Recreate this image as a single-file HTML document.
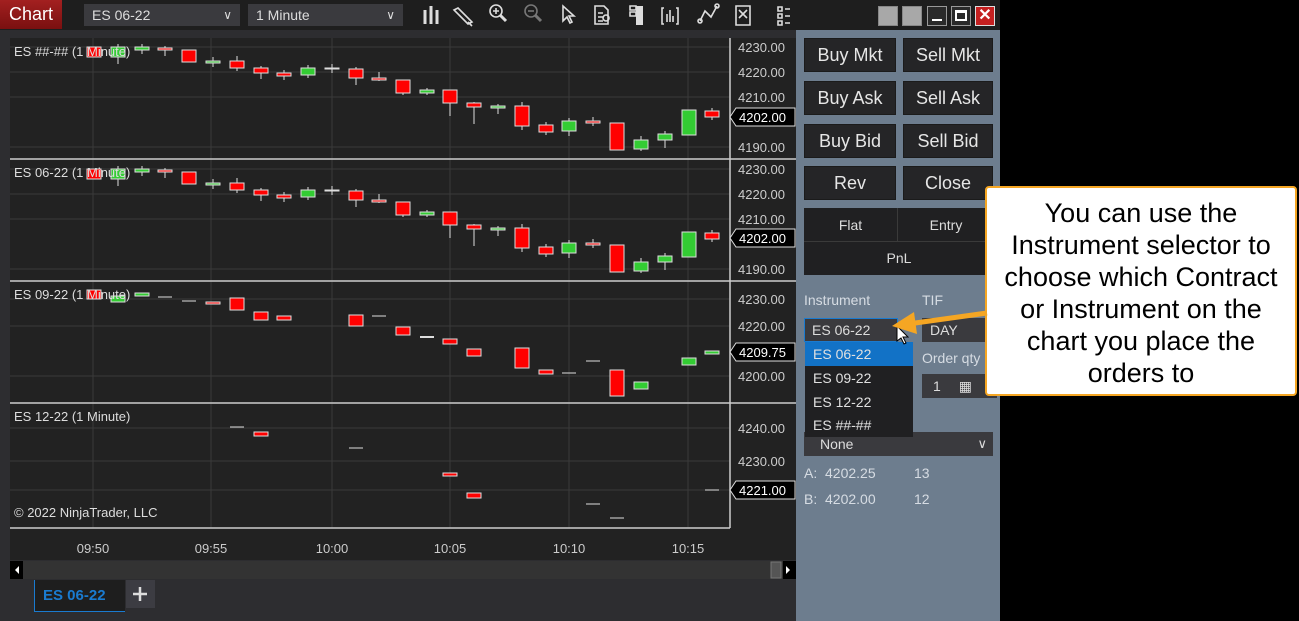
<!DOCTYPE html>
<html><head><meta charset="utf-8"><style>
*{margin:0;padding:0;box-sizing:border-box}
body{width:1299px;height:621px;background:#000;position:relative;overflow:hidden;font-family:"Liberation Sans",sans-serif}
.a{position:absolute}
.btn{position:absolute;background:#252527;border:1px solid #1b1b1b;color:#e6e6e6;font-size:18px;text-align:center;line-height:32px;height:34px}
.lbl{position:absolute;color:#d6dce3;font-size:14px}
</style></head><body>
<div class="a" style="left:0;top:0;width:1000px;height:30px;background:#1e1e1e"></div>
<div class="a" style="left:0;top:0;width:62px;height:29px;background:linear-gradient(#a32020,#7a1010);color:#fff;font-size:18px;line-height:29px;text-align:center">Chart</div>
<div class="a" style="left:84px;top:4px;width:156px;height:22px;background:#3a3a3e;color:#ddd;font-size:14px;line-height:22px;padding-left:8px">ES 06-22<span style="position:absolute;right:8px;font-size:12px">&#8744;</span></div>
<div class="a" style="left:248px;top:4px;width:155px;height:22px;background:#3a3a3e;color:#ddd;font-size:14px;line-height:22px;padding-left:8px">1 Minute<span style="position:absolute;right:8px;font-size:12px">&#8744;</span></div>
<svg class="a" style="left:410px;top:0" width="380" height="30" fill="none" stroke="#ddd" stroke-width="1.6">
<path d="M15 10v14M21 6v18M27 10v14" stroke-width="3"/>
<path d="M48 8l14 14-4 2-14-14zM58 22l4 4"/>
<circle cx="86" cy="11" r="6"/><path d="M86 8v6M83 11h6"/><path d="M90 15l6 6" stroke-width="3"/>
<g stroke="#777"><circle cx="121" cy="11" r="6"/><path d="M118 11h6"/><path d="M125 15l6 6" stroke-width="3"/></g>
<path d="M153 6l0 15 4-4 3 6 2-1-3-6h5z"/>
<path d="M185 6h9l4 4v14h-13zM188 13h5M188 17h5M188 21h5"/><circle cx="196" cy="18" r="3"/>
<path d="M220 6h6v4h-6zM220 12h6v4h-6z"/><rect x="226" y="6" width="7" height="19" fill="#ddd" stroke="none"/>
<path d="M254 8h-2v16h2M266 8h2v16h-2M257 22v-8M260 22v-12M263 22v-6"/>
<path d="M290 21l5-10 6 6 6-11"/><circle cx="290" cy="21" r="2"/><circle cx="307" cy="6" r="2"/>
<path d="M326 6h14v19h-14zM329 10l8 8M337 10l-8 8"/>
<path d="M368 7h4v4h-4zM368 14h4v4h-4zM368 21h4v4h-4zM375 9h12M375 16h12M375 23h12"/>
</svg>
<div class="a" style="left:878px;top:6px;width:20px;height:20px;background:#a8a8a8;border:1px solid #888"></div>
<div class="a" style="left:902px;top:6px;width:20px;height:20px;background:#a8a8a8;border:1px solid #888"></div>
<div class="a" style="left:927px;top:6px;width:20px;height:20px;background:#2a2a2a;border:1px solid #999"><div class="a" style="left:4px;top:12px;width:10px;height:2px;background:#fff"></div></div>
<div class="a" style="left:951px;top:6px;width:20px;height:20px;background:#2a2a2a;border:1px solid #999"><div class="a" style="left:3px;top:3px;width:12px;height:11px;border:2px solid #fff;border-top-width:3px"></div></div>
<div class="a" style="left:975px;top:6px;width:20px;height:20px;background:#c42020;border:1px solid #ddd;color:#fff;font-weight:bold;font-size:16px;text-align:center;line-height:18px">✕</div>

<div class="a" style="left:0;top:30px;width:796px;height:591px;background:#2d2d30"></div>
<svg class="a" style="left:0;top:0" width="796" height="621" font-family="Liberation Sans" font-size="13">
<rect x="10" y="38" width="786" height="522" fill="#222"/>
<g stroke="#3a3a3a" stroke-width="1">
<path d="M93 38V528M211 38V528M332 38V528M450 38V528M569 38V528M688 38V528"/>
<path d="M10 47H730M10 72H730M10 97H730M10 147H730M10 169H730M10 194H730M10 219H730M10 269H730M10 299H730M10 326H730M10 376H730M10 428H730M10 461H730M10 490H730"/>
</g>
<g stroke="#ccc" stroke-width="1.5"><path d="M10 159H796M10 281H796M10 403H796M10 528H730M730 38V528"/></g>
<defs>
<g id="p1" stroke="#ddd" stroke-width="1">
<path d="M118 44v20M142 44v10M165 46v10M213 57v10M237 56v15M261 66v13M284 70v10M308 65v13M332 64v9M356 67v18M379 72v9M403 80v15M427 88v7M450 90v26M474 102v22M498 104v10M522 102v28M546 122v13M569 118v18M593 117v9M617 123v12M641 136v15M665 131v17M712 108v12"/>
<g fill="#ff0000"><rect x="87" y="47" width="14" height="10"/><rect x="158" y="48" width="14" height="2"/><rect x="182" y="50" width="14" height="12"/><rect x="230" y="61" width="14" height="7"/><rect x="254" y="68" width="14" height="5"/><rect x="277" y="73" width="14" height="3"/><rect x="349" y="69" width="14" height="9"/><rect x="372" y="78" width="14" height="2"/><rect x="396" y="80" width="14" height="13"/><rect x="443" y="90" width="14" height="13"/><rect x="467" y="103" width="14" height="4"/><rect x="515" y="106" width="14" height="20"/><rect x="539" y="125" width="14" height="7"/><rect x="586" y="121" width="14" height="2"/><rect x="610" y="123" width="14" height="27"/><rect x="705" y="111" width="14" height="6"/></g>
<g fill="#33cc33"><rect x="111" y="47" width="14" height="10"/><rect x="135" y="47" width="14" height="3"/><rect x="206" y="61" width="14" height="2"/><rect x="301" y="68" width="14" height="7"/><rect x="420" y="90" width="14" height="3"/><rect x="491" y="106" width="14" height="2"/><rect x="562" y="121" width="14" height="10"/><rect x="634" y="140" width="14" height="9"/><rect x="658" y="134" width="14" height="6"/><rect x="682" y="110" width="14" height="25"/></g>
<rect x="325" y="68" width="14" height="1" fill="#ddd"/>
</g>
</defs>
<use href="#p1"/>
<g transform="translate(0,122)"><use href="#p1"/></g>
<g stroke="#ddd" stroke-width="1">
<g fill="#ff0000"><rect x="87" y="290" width="14" height="9"/><rect x="206" y="302" width="14" height="2"/><rect x="230" y="298" width="14" height="12"/><rect x="254" y="312" width="14" height="8"/><rect x="277" y="316" width="14" height="4"/><rect x="349" y="315" width="14" height="11"/><rect x="396" y="327" width="14" height="8"/><rect x="443" y="339" width="14" height="5"/><rect x="467" y="349" width="14" height="7"/><rect x="515" y="348" width="14" height="20"/><rect x="539" y="370" width="14" height="4"/><rect x="610" y="370" width="14" height="26"/>
<rect x="254" y="432" width="14" height="4"/><rect x="443" y="473" width="14" height="3"/><rect x="467" y="493" width="14" height="5"/></g>
<g fill="#33cc33"><rect x="111" y="296" width="14" height="6"/><rect x="135" y="293" width="14" height="3"/><rect x="634" y="382" width="14" height="7"/><rect x="682" y="358" width="14" height="7"/><rect x="705" y="351" width="14" height="3"/></g>
<path d="M158 297h14M182 301h14M372 316h14M562 373h14M586 361h14M230 427h14M349 448h14M586 504h14M610 518h14M705 490h14"/>
<path d="M420 337h14" stroke-width="2"/>
</g>
<g fill="#ddd">
<text x="14" y="56">ES ##-## (1 Minute)</text>
<text x="14" y="177">ES 06-22 (1 Minute)</text>
<text x="14" y="299">ES 09-22 (1 Minute)</text>
<text x="14" y="421">ES 12-22 (1 Minute)</text>
<text x="14" y="517">© 2022 NinjaTrader, LLC</text>
</g>
<g fill="#ccc" font-size="13">
<text x="738" y="52">4230.00</text><text x="738" y="77">4220.00</text><text x="738" y="102">4210.00</text><text x="738" y="152">4190.00</text>
<text x="738" y="174">4230.00</text><text x="738" y="199">4220.00</text><text x="738" y="224">4210.00</text><text x="738" y="274">4190.00</text>
<text x="738" y="304">4230.00</text><text x="738" y="331">4220.00</text><text x="738" y="381">4200.00</text>
<text x="738" y="433">4240.00</text><text x="738" y="466">4230.00</text>
</g>
<g stroke="#ddd" fill="#000">
<path d="M730 117l6-9h59v18h-59z"/><path d="M730 238l6-9h59v18h-59z"/><path d="M730 352l6-9h59v18h-59z"/><path d="M730 490l6-9h59v18h-59z"/>
</g>
<g fill="#fff" font-size="13"><text x="739" y="122">4202.00</text><text x="739" y="243">4202.00</text><text x="739" y="357">4209.75</text><text x="739" y="495">4221.00</text></g>
<g fill="#ccc" font-size="13" text-anchor="middle"><text x="93" y="553">09:50</text><text x="211" y="553">09:55</text><text x="332" y="553">10:00</text><text x="450" y="553">10:05</text><text x="569" y="553">10:10</text><text x="688" y="553">10:15</text></g>
<rect x="10" y="561" width="786" height="18" fill="#333"/>
<rect x="10" y="561" width="13" height="18" fill="#000"/><path d="M19 566v8l-4-4z" fill="#fff"/>
<rect x="783" y="561" width="13" height="18" fill="#000"/><path d="M786 566v8l4-4z" fill="#fff"/>
<rect x="771" y="562" width="10" height="16" fill="#555" stroke="#777"/>
<rect x="34" y="580" width="91" height="32" fill="#1e1e1e"/>
<path d="M34.5 580V611.5H125" stroke="#1a7bd0" fill="none"/>
<text x="43" y="600" fill="#1a7bd0" font-size="15" font-weight="bold">ES 06-22</text>
<rect x="126" y="580" width="29" height="28" fill="#3c3c42"/>
<path d="M140 587v14M133 594h14" stroke="#ddd" stroke-width="2.5"/>
</svg>

<div class="a" style="left:796px;top:30px;width:204px;height:591px;background:#6d7d8e"></div>
<div class="btn" style="left:804px;top:38px;width:92px">Buy Mkt</div>
<div class="btn" style="left:903px;top:38px;width:90px">Sell Mkt</div>
<div class="btn" style="left:804px;top:81px;width:92px">Buy Ask</div>
<div class="btn" style="left:903px;top:81px;width:90px">Sell Ask</div>
<div class="btn" style="left:804px;top:124px;width:92px">Buy Bid</div>
<div class="btn" style="left:903px;top:124px;width:90px">Sell Bid</div>
<div class="btn" style="left:804px;top:166px;width:92px">Rev</div>
<div class="btn" style="left:903px;top:166px;width:90px">Close</div>
<div class="a" style="left:804px;top:208px;width:190px;height:67px;background:#202022"></div>
<div class="a" style="left:804px;top:208px;width:94px;height:34px;border-right:1px solid #3a3a3a;border-bottom:1px solid #3a3a3a;color:#ddd;font-size:14px;text-align:center;line-height:34px">Flat</div>
<div class="a" style="left:898px;top:208px;width:96px;height:34px;border-bottom:1px solid #3a3a3a;color:#ddd;font-size:14px;text-align:center;line-height:34px">Entry</div>
<div class="a" style="left:804px;top:242px;width:190px;height:33px;color:#ddd;font-size:14px;text-align:center;line-height:33px">PnL</div>
<div class="lbl" style="left:804px;top:292px">Instrument</div>
<div class="lbl" style="left:922px;top:292px">TIF</div>
<div class="a" style="left:804px;top:318px;width:94px;height:24px;background:#3a3a3e;border:1px solid #1a7bd0;color:#ddd;font-size:14px;line-height:22px;padding-left:7px">ES 06-22</div>
<div class="a" style="left:922px;top:318px;width:75px;height:24px;background:#3a3a3e;color:#ddd;font-size:14px;line-height:24px;padding-left:8px">DAY</div>
<div class="lbl" style="left:922px;top:350px">Order qty</div>
<div class="a" style="left:922px;top:374px;width:75px;height:24px;background:#3a3a3e;color:#ddd;font-size:14px;line-height:24px;padding-left:11px">1 <span style="margin-left:14px">▦</span></div>
<div class="a" style="left:804px;top:432px;width:189px;height:24px;background:#3a3a3e;color:#ddd;font-size:14px;line-height:24px;padding-left:16px">None<span style="position:absolute;right:6px;font-size:13px">&#8744;</span></div>
<div class="a" style="left:805px;top:342px;width:108px;height:95px;background:#202022;color:#e0e0e0;font-size:14px">
<div style="height:24px;line-height:24px;background:#1272c6;padding-left:8px">ES 06-22</div>
<div style="height:24px;line-height:24px;padding-left:8px">ES 09-22</div>
<div style="height:24px;line-height:24px;padding-left:8px">ES 12-22</div>
<div style="height:23px;line-height:23px;padding-left:8px">ES ##-##</div>
</div>
<div class="lbl" style="left:804px;top:465px">A:&nbsp; 4202.25</div><div class="lbl" style="left:914px;top:465px">13</div>
<div class="lbl" style="left:804px;top:491px">B:&nbsp; 4202.00</div><div class="lbl" style="left:914px;top:491px">12</div>
<svg class="a" style="left:896px;top:325px" width="14" height="22"><path d="M1 1v15l4-3 3 6 2-1-3-6h5z" fill="#fff" stroke="#000"/></svg>

<div class="a" style="left:985px;top:186px;width:312px;height:210px;background:#fff;border:2px solid #f5a623;border-radius:4px;color:#000;font-size:27px;line-height:32px;text-align:center;padding-top:9px;white-space:nowrap">You can use the<br>Instrument selector to<br>choose which Contract<br>or Instrument on the<br>chart you place the<br>orders to</div>
<svg class="a" style="left:880px;top:300px" width="110" height="50"><path d="M107 13L28 24" stroke="#f5a623" stroke-width="5"/><path d="M12 26l22-14 3 22z" fill="#f5a623"/></svg>
</body></html>
